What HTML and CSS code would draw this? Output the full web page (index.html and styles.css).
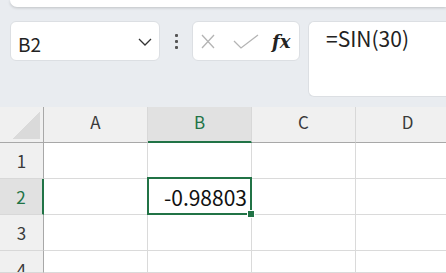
FILE: index.html
```html
<!DOCTYPE html>
<html lang="ja">
<head>
  <meta charset="UTF-8">
  <meta name="viewport" content="width=device-width, initial-scale=1.0">
  <title>SIN</title>
  <link rel="stylesheet" href="styles.css">
</head>
<body>

  <!-- リボンの下端 -->
  <div class="ribbon">
    <span class="ribbon-text">ヘルプ</span>
  </div>

  <!-- 名前ボックスと数式バー -->
  <div class="formula-row">
    <div class="name-box">
      <span>B2</span>
      <svg class="chevron" width="14" height="8" viewBox="0 0 14 8">
        <path d="M1 1 L7 7 L13 1" fill="none" stroke="#333" stroke-width="1.3"/>
      </svg>
    </div>
    <div class="dots"><i></i><i></i><i></i></div>
    <div class="fx-box">
      <svg width="14" height="15" viewBox="0 0 14 15">
        <path d="M1 1 L13 14 M13 1 L1 14" stroke="#b4b4b4" stroke-width="1.3" fill="none"/>
      </svg>
      <svg width="26" height="15" viewBox="0 0 26 15">
        <path d="M1 7 L8 14 L25 1" stroke="#b4b4b4" stroke-width="1.3" fill="none"/>
      </svg>
      <span class="fx">fx</span>
    </div>
    <div class="formula">=SIN(30)</div>
  </div>

  <!-- シート -->
  <div class="sheet">
    <div class="corner"></div>
    <div class="col-head">A</div>
    <div class="col-head active">B</div>
    <div class="col-head">C</div>
    <div class="col-head">D</div>

    <div class="row-head">1</div>
    <div class="cell"></div>
    <div class="cell"></div>
    <div class="cell"></div>
    <div class="cell"></div>

    <div class="row-head active">2</div>
    <div class="cell"></div>
    <div class="cell selected">-0.98803</div>
    <div class="cell"></div>
    <div class="cell"></div>

    <div class="row-head">3</div>
    <div class="cell"></div>
    <div class="cell"></div>
    <div class="cell"></div>
    <div class="cell"></div>

    <div class="row-head last">4</div>
    <div class="cell"></div>
    <div class="cell"></div>
    <div class="cell"></div>
    <div class="cell"></div>
  </div>

</body>
</html>
```

FILE: styles.css
```css
body {
  margin: 0;
  width: 446px;
  height: 273px;
  overflow: hidden;
  background: #e9ecf0;
  font-family: "Noto Sans CJK JP", "Noto Sans", sans-serif;
  color: #222;
}

.ribbon {
  height: 7px;
  margin-left: 10px;
  background: #fff;
  border-bottom-left-radius: 9px;
  box-shadow: 0 1px 3px rgba(0,0,0,0.18);
  overflow: hidden;
  text-align: center;
}
.ribbon-text {
  display: inline-block;
  margin-top: -12px;
  margin-left: -20px;
  font-size: 14px;
  line-height: 16px;
  color: #333;
}

.formula-row {
  display: flex;
  align-items: flex-start;
  padding: 14px 0 0 10px;
  height: 86px;
}

.name-box {
  width: 150px;
  height: 40px;
  box-sizing: border-box;
  background: #fff;
  border: 1px solid #dcdfe3;
  border-radius: 6px;
  display: flex;
  align-items: center;
  justify-content: space-between;
  padding: 0 7px 0 7px;
  font-size: 19px;
}
.name-box span {
  padding-top: 4px;
}
.chevron {
  margin-top: 2px;
}

.dots {
  width: 32px;
  height: 40px;
  display: flex;
  flex-direction: column;
  align-items: center;
  justify-content: center;
  gap: 3px;
}
.dots i {
  width: 3px;
  height: 3px;
  border-radius: 1px;
  background: #555;
}

.fx-box {
  width: 108px;
  height: 40px;
  box-sizing: border-box;
  background: #fff;
  border: 1px solid #dcdfe3;
  border-radius: 6px;
  display: flex;
  align-items: center;
  padding-left: 8px;
}
.fx-box svg:first-child {
  margin-right: 18px;
}
.fx {
  margin-left: 13px;
  font-family: "DejaVu Serif", serif;
  font-style: italic;
  font-weight: bold;
  font-size: 18px;
  color: #222;
}

.formula {
  flex: 1;
  margin-left: 8px;
  height: 76px;
  box-sizing: border-box;
  background: #fff;
  border: 1px solid #dcdfe3;
  border-right: none;
  border-radius: 6px 0 0 6px;
  padding: 1px 0 0 17px;
  font-size: 21px;
}

.sheet {
  display: grid;
  grid-template-columns: 44px repeat(4, 104px);
  grid-template-rows: 36px repeat(3, 36px) 22px;
  background: #fff;
  font-size: 17px;
}

.corner {
  background: #f0f0f0;
  border-right: 1px solid #a8a8a8;
  border-bottom: 1px solid #a8a8a8;
  position: relative;
}
.corner::after {
  content: "";
  position: absolute;
  right: 3px;
  bottom: 3px;
  width: 28px;
  height: 28px;
  background: linear-gradient(to bottom right, transparent 50%, #dadada 50%);
}

.col-head {
  background: #f0f0f0;
  border-right: 1px solid #d8d8d8;
  border-bottom: 1px solid #a8a8a8;
  display: flex;
  align-items: center;
  justify-content: center;
  padding-bottom: 6px;
  color: #3a3a3a;
}
.col-head.active {
  background: #e1e1e1;
  color: #217346;
  border-bottom: 2px solid #217346;
  padding-bottom: 5px;
}

.row-head {
  background: #f0f0f0;
  border-right: 1px solid #a8a8a8;
  border-bottom: 1px solid #d8d8d8;
  display: flex;
  align-items: center;
  justify-content: center;
  color: #3a3a3a;
}
.row-head.active {
  background: #e1e1e1;
  color: #217346;
  border-right: 2px solid #217346;
}
.row-head.last {
  align-items: flex-start;
  padding-top: 6px;
  overflow: hidden;
}

.cell {
  border-right: 1px solid #dadada;
  border-bottom: 1px solid #dadada;
  display: flex;
  align-items: center;
  justify-content: flex-end;
  padding-right: 4px;
  font-size: 21px;
  color: #111;
}
.cell.selected {
  position: relative;
}
.cell.selected::before {
  content: "";
  position: absolute;
  left: -1px;
  top: -2px;
  right: -1px;
  bottom: -1px;
  border: 2px solid #217346;
}
.cell.selected::after {
  content: "";
  position: absolute;
  right: -4px;
  bottom: -4px;
  width: 6px;
  height: 6px;
  background: #217346;
  border: 1px solid #fff;
}
```
